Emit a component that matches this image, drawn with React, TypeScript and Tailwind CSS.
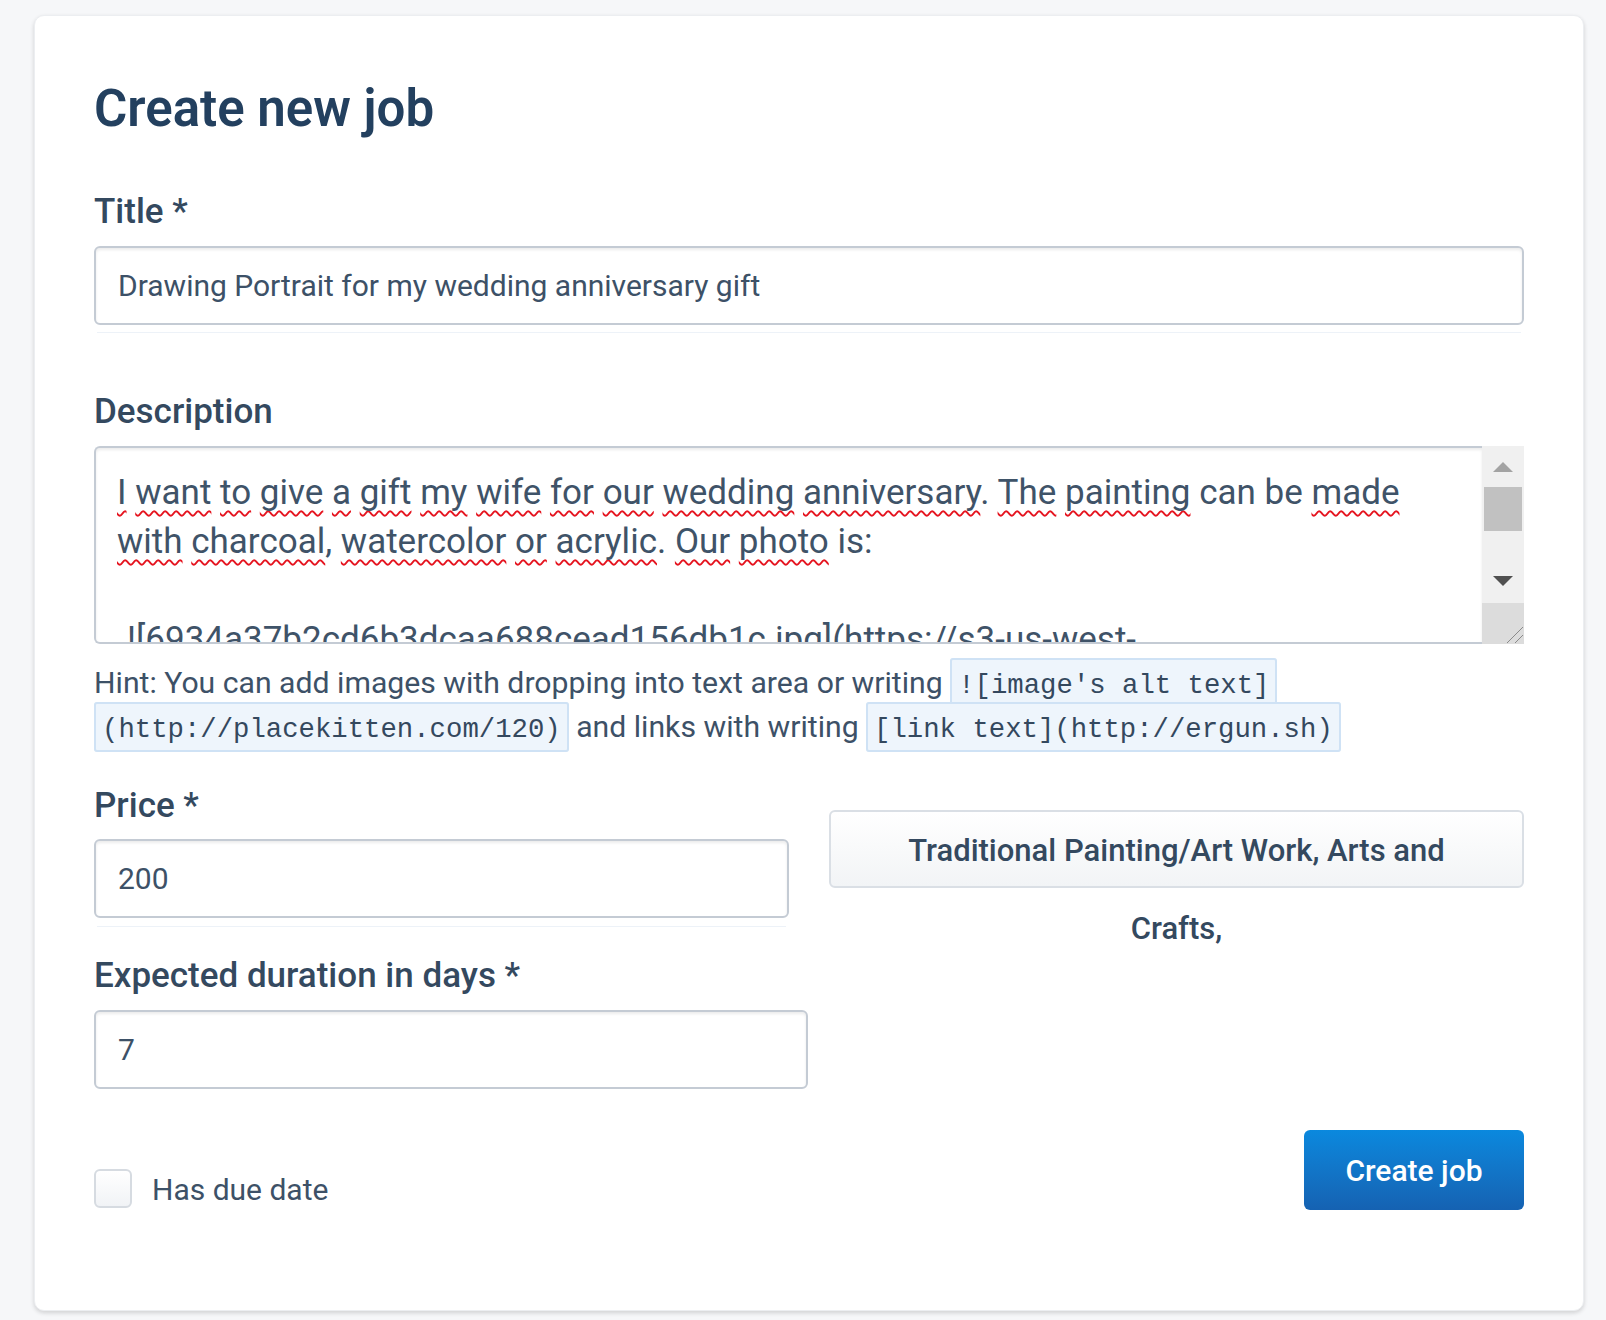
import React from "react";

const description =
  "I want to give a gift my wife for our wedding anniversary. The painting can be made with charcoal, watercolor or acrylic. Our photo is:";

// words the spell checker leaves alone
const knownWords = ["can", "be", "is"];

function SpellChecked({ text }: { text: string }) {
  const tokens = text.split(" ");
  return (
    <>
      {tokens.map((token, i) => {
        const match = token.match(/^([A-Za-z]+)(.*)$/);
        const word = match ? match[1] : token;
        const rest = match ? match[2] : "";
        const flagged = !knownWords.includes(word);
        return (
          <React.Fragment key={i}>
            {flagged ? (
              <span className="underline decoration-wavy decoration-[#e5141f] decoration-[1.5px] underline-offset-[6px] [text-decoration-skip-ink:none]">
                {word}
              </span>
            ) : (
              word
            )}
            {rest}
            {i < tokens.length - 1 ? " " : ""}
          </React.Fragment>
        );
      })}
    </>
  );
}

function Code({ children }: { children: React.ReactNode }) {
  return (
    <code className="font-['Liberation_Mono','DejaVu_Sans_Mono',monospace] text-[27.3px] leading-none text-[#34485e] bg-[#eef5fc] border-2 border-[#cfe2f5] rounded-[3px] px-[6px] pt-[10px] pb-[5px]">
      {children}
    </code>
  );
}

function FieldLabel({ children }: { children: React.ReactNode }) {
  return (
    <label className="block text-[35px] leading-[40px] font-medium text-[#34495f]">
      {children}
    </label>
  );
}

function TextInput({ value, className }: { value: string; className?: string }) {
  return (
    <input
      type="text"
      defaultValue={value}
      className={`block h-[79px] rounded-[6px] border-2 border-[#c4cbd4] bg-white px-[22px] text-[30px] text-[#3d5167] outline-none shadow-[inset_0_2px_3px_rgba(10,10,10,0.08)] ${className ?? ""}`}
    />
  );
}

function FakeScrollbar() {
  return (
    <div className="w-[42px] flex flex-col bg-[#f0f0f0]">
      <div className="h-[41px] flex items-center justify-center">
        <svg width="20" height="10" viewBox="0 0 20 10">
          <path d="M10 0 L20 10 L0 10 Z" fill="#a3a3a3" />
        </svg>
      </div>
      <div className="h-[44px] mx-[2px] bg-[#c1c1c1]" />
      <div className="flex-1" />
      <div className="h-[31px] flex items-start justify-center pt-[4px]">
        <svg width="20" height="10" viewBox="0 0 20 10">
          <path d="M0 0 L20 0 L10 10 Z" fill="#505050" />
        </svg>
      </div>
      <div className="h-[41px] bg-[#dcdcdc] flex items-end justify-end">
        <svg width="22" height="22" viewBox="0 0 22 22">
          <path d="M21 5 L5 21 M21 13 L13 21" stroke="#8a8a8a" strokeWidth="1" />
        </svg>
      </div>
    </div>
  );
}

export default function App() {
  return (
    <div className="min-h-[1320px] bg-[#f6f7f9] pt-[15px] pl-[34px] pr-[22px] pb-[11px] font-['Roboto','Noto_Sans',sans-serif]">
      <div className="bg-white rounded-[10px] border border-[#eceef1] shadow-[0_2px_4px_rgba(10,10,10,0.16)] px-[59px] pt-[63px] pb-[100px]">
        <h1 className="text-[51px] leading-[60px] font-semibold text-[#23405f]">
          Create new job
        </h1>

        <div className="mt-[53px]">
          <FieldLabel>Title *</FieldLabel>
          <TextInput
            value="Drawing Portrait for my wedding anniversary gift"
            className="w-full mt-[14px]"
          />
          <div className="mt-[7px] mx-[3px] h-px bg-[#edf2f8]" />
        </div>

        <div className="mt-[59px]">
          <FieldLabel>Description</FieldLabel>
          <div className="mt-[14px] flex h-[198px]">
            <div className="flex-1 overflow-hidden rounded-l-[6px] border-2 border-r-0 border-[#c4cbd4] bg-white pl-[21px] pr-[30px] pt-[20px] text-[35px] leading-[49px] text-[#3f5368] shadow-[inset_0_2px_3px_rgba(10,10,10,0.08)]">
              <div>
                <SpellChecked text={description} />
              </div>
              <div className="h-[49px]" />
              <div className="pl-[10px]">
                ![6934a37b2cd6b3dcaa688cead156db1c.jpg](https://s3-us-west-2.amazonaws.com/ergun/6934a37b2cd6b3dcaa688cead156db1c.jpg)
              </div>
            </div>
            <FakeScrollbar />
          </div>
        </div>

        <p className="mt-[17px] text-[30.2px] leading-[44px] text-[#3d5167]">
          Hint: You can add images with dropping into text area or writing{" "}
          <Code>![image's alt text]</Code>
          <br />
          <Code>(http://placekitten.com/120)</Code> and links with writing{" "}
          <Code>[link text](http://ergun.sh)</Code>
        </p>

        <div className="mt-[37px] grid grid-cols-2 gap-[40px]">
          <div>
            <FieldLabel>Price *</FieldLabel>
            <TextInput value="200" className="w-full mt-[13px]" />
            <div className="mt-[8px] mx-[3px] h-px bg-[#edf2f8]" />
          </div>
          <div className="pt-[24px]">
            <button
              type="button"
              className="block w-full h-[78px] rounded-[6px] border-2 border-[#dadfe5] bg-gradient-to-b from-white to-[#f2f4f6] text-[31px] leading-[78px] font-medium text-[#34495f] text-center"
            >
              Traditional Painting/Art Work, Arts and
              <br />
              Crafts,
            </button>
          </div>
        </div>

        <div className="mt-[29px]">
          <FieldLabel>Expected duration in days *</FieldLabel>
          <TextInput value="7" className="w-[714px] mt-[14px]" />
        </div>

        <div className="mt-[41px] flex items-end justify-between">
          <label className="flex items-center gap-[20px] mb-px">
            <span className="w-[38px] h-[39px] rounded-[6px] border-2 border-[#d6dbe1] bg-gradient-to-b from-white to-[#f1f3f6]" />
            <span className="text-[30px] leading-[39px] pt-[2px] text-[#3d5167]">Has due date</span>
          </label>
          <button
            type="button"
            className="w-[220px] h-[80px] rounded-[6px] bg-gradient-to-b from-[#0a89de] to-[#1562b2] text-white text-[30px] font-medium"
          >
            Create job
          </button>
        </div>
      </div>
    </div>
  );
}
